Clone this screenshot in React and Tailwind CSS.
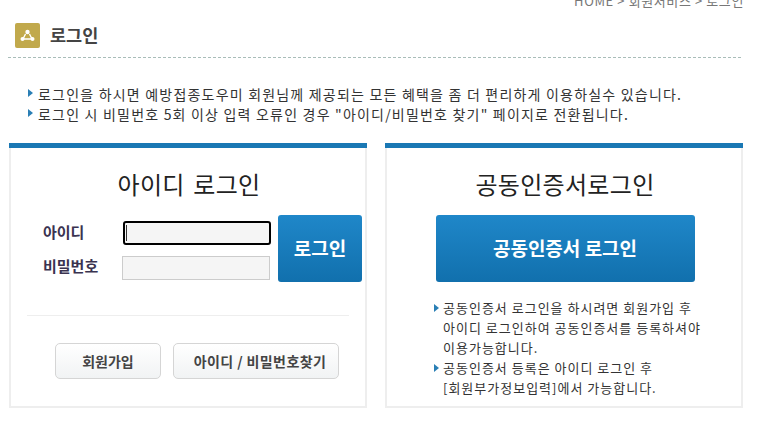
const font = "font-['Noto_Sans_CJK_KR','Liberation_Sans',sans-serif]"

function Bullet({ className = '' }) {
  return <span className={`absolute w-0 h-0 border-y-[4px] border-y-transparent border-l-[5px] border-l-[#2a7fb5] ${className}`} />
}

function Panel({ title, children }) {
  return (
    <div className="w-[358px] h-[265px] flex flex-col">
      <div className="h-[5px] bg-[#1a78b4]" />
      <div className="flex-1 bg-white border-x-2 border-b-2 border-[#eeeeee] flex flex-col">
        <h2 className="mt-[20px] h-[32px] pl-[2px] text-center text-[24px] leading-[32px] tracking-[0.3px] [word-spacing:3px] text-[#222222]">{title}</h2>
        {children}
      </div>
    </div>
  )
}

function BlueButton({ className = '', children }) {
  return (
    <button className={`h-[67px] rounded-[3px] bg-gradient-to-b from-[#1f87c9] to-[#1170ad] text-white font-bold ${className}`}>
      {children}
    </button>
  )
}

function GrayButton({ className = '', children }) {
  return (
    <button className={`h-[36px] rounded-[5px] border border-[#d5d5d5] bg-gradient-to-b from-white to-[#f1f3f4] text-[14px] font-bold text-[#444444] ${className}`}>
      {children}
    </button>
  )
}

export default function App() {
  return (
    <div className={`w-[757px] h-[423px] overflow-hidden bg-white relative ${font}`}>
      {/* Breadcrumb */}
      <div className="h-[31px] -mt-[8px] pr-[13px] text-right text-[13px] leading-[18px] tracking-[0.6px] text-[#777777]">
        HOME &gt; 회원서비스 &gt; 로그인
      </div>

      {/* Title */}
      <div className="ml-[8px] w-[733px] h-[35px] border-b border-dashed border-[#a9bdb9] flex items-start pl-[7px]">
        <div className="w-[25px] h-[25px] rounded-[2px] bg-[#c1a94c] flex items-center justify-center">
          <svg width="15" height="13" viewBox="0 0 15 13" fill="none" stroke="white">
            <circle cx="7.5" cy="3" r="2.2" fill="white" stroke="none" />
            <path d="M5.5 5 L3 10 M9.5 5 L12 10 M3 10 H12" strokeWidth="1.4" />
            <circle cx="2.5" cy="10" r="2" fill="white" stroke="none" />
            <circle cx="12.5" cy="10" r="2" fill="white" stroke="none" />
          </svg>
        </div>
        <h1 className="ml-[10px] text-[17.5px] leading-[23px] font-bold text-[#444444]">로그인</h1>
      </div>

      {/* Notice */}
      <ul className="mt-[26px] pl-[38px] text-[14px] leading-[20px] tracking-[1.2px] text-[#333333]">
        <li className="relative">
          <Bullet className="-left-[10px] top-[5px]" />
          로그인을 하시면 예방접종도우미 회원님께 제공되는 모든 혜택을 좀 더 편리하게 이용하실수 있습니다.
        </li>
        <li className="relative">
          <Bullet className="-left-[10px] top-[5px]" />
          로그인 시 비밀번호 5회 이상 입력 오류인 경우 "아이디/비밀번호 찾기" 페이지로 전환됩니다.
        </li>
      </ul>

      <div className="mt-[19px] ml-[9px] flex gap-[18px]">
        {/* ID login */}
        <Panel title="아이디 로그인">
          <div className="mt-[15px] ml-[32px] flex">
            <div className="w-[79px] pt-[5px] flex flex-col gap-[10px] text-[15px] leading-[24px] font-bold text-[#3a3350]">
              <label>아이디</label>
              <label>비밀번호</label>
            </div>
            <div className="flex flex-col gap-[11px] pt-[6px]">
              <div className="relative ml-[1px]">
                <input autoFocus className="block w-[148px] h-[24px] rounded-[3px] bg-[#f5f5f5] border-2 border-black outline-none" />
                <span className="absolute left-[3px] top-[4px] w-px h-[16px] bg-[#333333]" />
              </div>
              <input type="password" className="w-[148px] h-[24px] bg-[#f5f5f5] border border-[#cccccc] outline-none" />
            </div>
            <BlueButton className="ml-[7px] w-[84px] text-[19px]">로그인</BlueButton>
          </div>
          <div className="mt-[33px] mx-[16px] border-t border-[#eeeeee]" />
          <div className="mt-[27px] ml-[44px] flex gap-[12px]">
            <GrayButton className="w-[106px]">회원가입</GrayButton>
            <GrayButton className="w-[166px] pl-[8px] tracking-[0.4px]">아이디 / 비밀번호찾기</GrayButton>
          </div>
        </Panel>

        {/* Certificate login */}
        <Panel title="공동인증서로그인">
          <div className="mt-[15px] pl-[2px] flex justify-center">
            <BlueButton className="w-[259px] text-[19px]">공동인증서 로그인</BlueButton>
          </div>
          <ul className="mt-[16px] ml-[56px] text-[13px] leading-[20px] tracking-[1px] text-[#333333]">
            <li className="relative">
              <Bullet className="-left-[9px] top-[6px]" />
              공동인증서 로그인을 하시려면 회원가입 후<br />
              아이디 로그인하여 공동인증서를 등록하셔야<br />
              이용가능합니다.
            </li>
            <li className="relative">
              <Bullet className="-left-[9px] top-[6px]" />
              공동인증서 등록은 아이디 로그인 후<br />
              [회원부가정보입력]에서 가능합니다.
            </li>
          </ul>
        </Panel>
      </div>
    </div>
  )
}
